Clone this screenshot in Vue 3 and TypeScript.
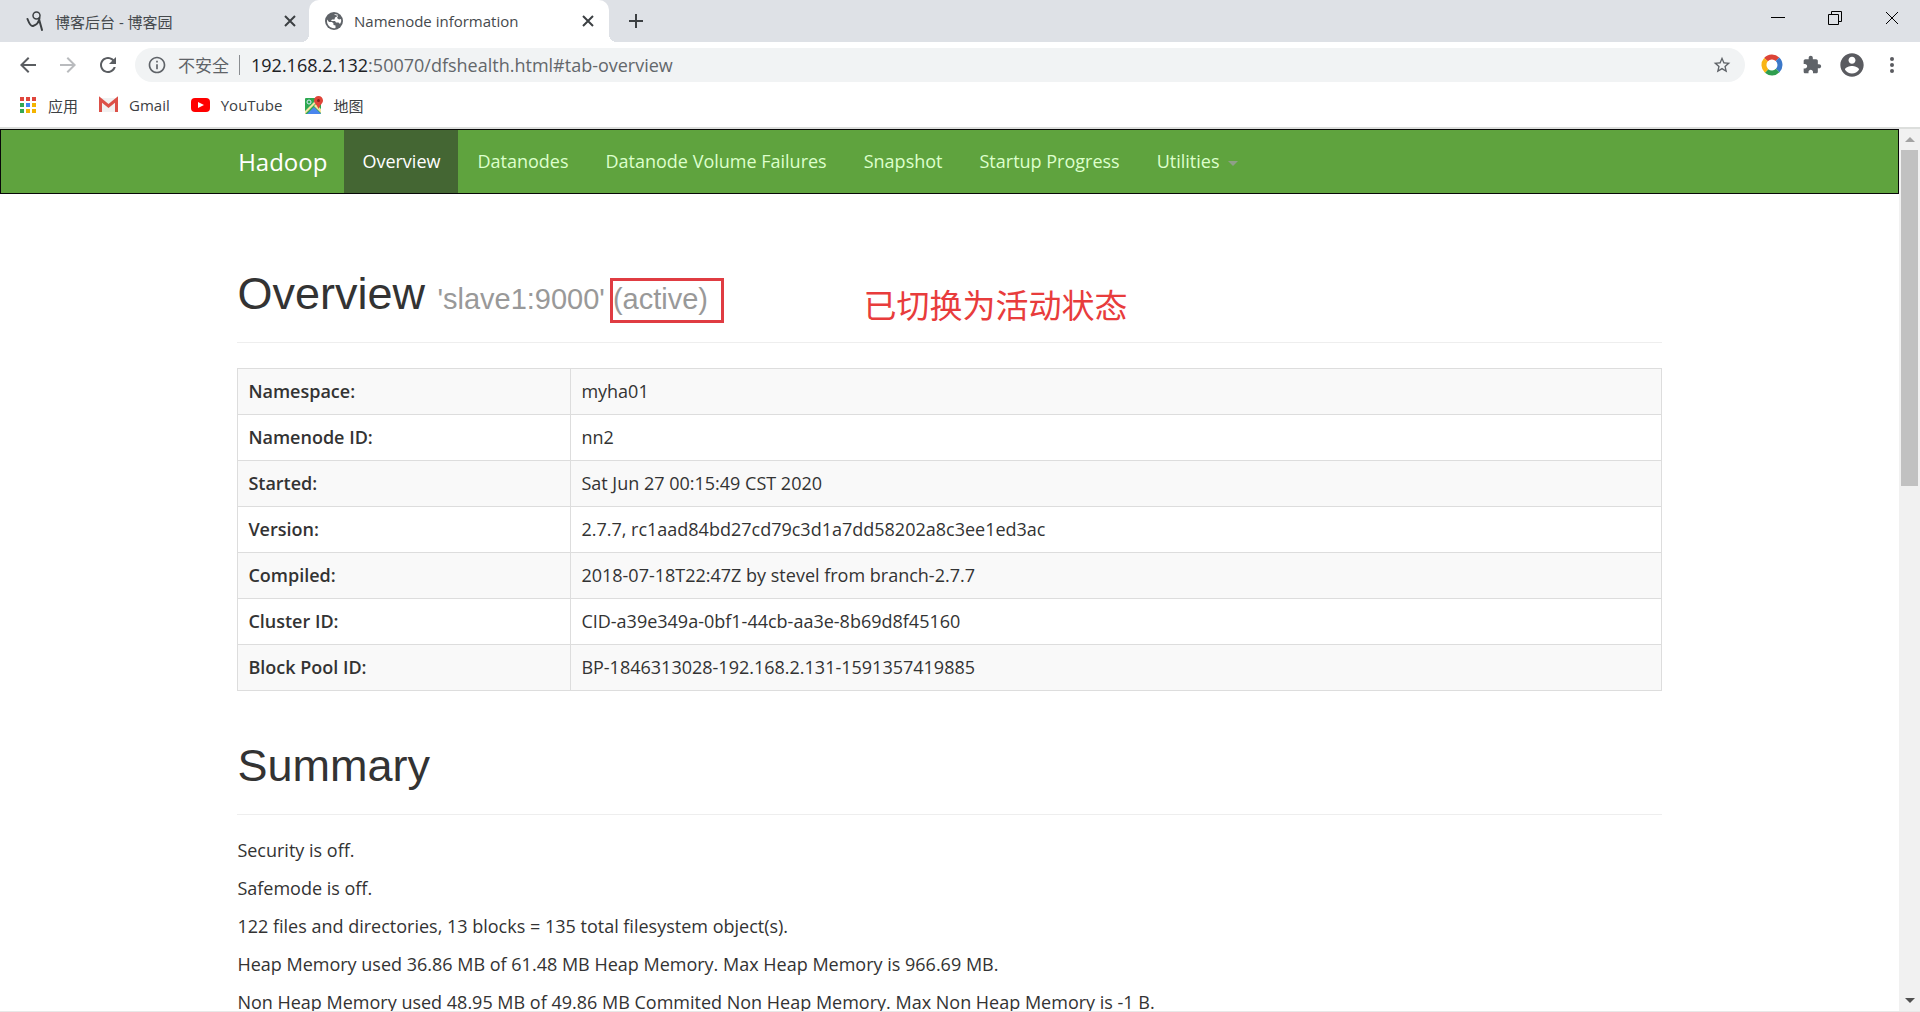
<script setup lang="ts">
interface Row {
  label: string
  value: string
}

const navItems: string[] = ['Overview', 'Datanodes', 'Datanode Volume Failures', 'Snapshot', 'Startup Progress']

const rows: Row[] = [
  { label: 'Namespace:', value: 'myha01' },
  { label: 'Namenode ID:', value: 'nn2' },
  { label: 'Started:', value: 'Sat Jun 27 00:15:49 CST 2020' },
  { label: 'Version:', value: '2.7.7, rc1aad84bd27cd79c3d1a7dd58202a8c3ee1ed3ac' },
  { label: 'Compiled:', value: '2018-07-18T22:47Z by stevel from branch-2.7.7' },
  { label: 'Cluster ID:', value: 'CID-a39e349a-0bf1-44cb-aa3e-8b69d8f45160' },
  { label: 'Block Pool ID:', value: 'BP-1846313028-192.168.2.131-1591357419885' },
]

const summary: string[] = [
  'Security is off.',
  'Safemode is off.',
  '122 files and directories, 13 blocks = 135 total filesystem object(s).',
  'Heap Memory used 36.86 MB of 61.48 MB Heap Memory. Max Heap Memory is 966.69 MB.',
  'Non Heap Memory used 48.95 MB of 49.86 MB Commited Non Heap Memory. Max Non Heap Memory is -1 B.',
]

const appColors: string[] = ['#e0463c', '#e0463c', '#e0463c', '#34a853', '#4285f4', '#f4b400', '#34a853', '#f4b400', '#f4b400']
</script>

<template>
  <div class="window">
    <header class="tabstrip">
      <div class="tab">
        <svg class="favicon" viewBox="0 0 18 20" fill="none" stroke="#3c4043" stroke-linecap="round">
          <circle cx="10.500" cy="4.500" r="3.500" stroke-width="1.500" />
          <path d="M1.500 8C3 12 5 15.500 7 15c3-1 6-3.500 6.500-8M13 8c1 4 2 7 3 11" stroke-width="2" />
        </svg>
        <span class="tab-title">博客后台 - 博客园</span>
        <button class="tab-close" aria-label="关闭标签页">
          <svg viewBox="0 0 20 20"><path d="M5 5l10 10M15 5L5 15" stroke="#3c4043" stroke-width="2" /></svg>
        </button>
      </div>
      <div class="tab active">
        <svg class="favicon" viewBox="0 0 18 18">
          <circle cx="9" cy="9" r="9" fill="#5f6368" />
          <path d="M2 7.500L4 10h3l1.500 1.500V13l2 .500V16C6 17 2 13.500 2 9zM9 2.500c1.500-.500 3-.200 4 .300L12 4.500l-2 1-.500 2H7l-1 1.500h4l1 1.500h2.500l1.500 1.500c1-1.500 1.500-3 1-5l-2 .500-2-1.500 1-2z" fill="#fff" />
        </svg>
        <span class="tab-title">Namenode information</span>
        <button class="tab-close" aria-label="关闭标签页">
          <svg viewBox="0 0 20 20"><path d="M5 5l10 10M15 5L5 15" stroke="#3c4043" stroke-width="2" /></svg>
        </button>
      </div>
      <button class="new-tab" aria-label="新标签页">
        <svg viewBox="0 0 20 20"><path d="M10 3v14M3 10h14" stroke="#3c4043" stroke-width="2" /></svg>
      </button>
      <div class="window-buttons">
        <button aria-label="最小化">
          <svg viewBox="0 0 14 14"><path d="M0 6.500h14" stroke="#000" /></svg>
        </button>
        <button aria-label="还原">
          <svg viewBox="0 0 14 14" fill="none" stroke="#000"><path d="M.500 3.500h10v10H.500zM3.500 3V.500h10v10H11" /></svg>
        </button>
        <button aria-label="关闭">
          <svg viewBox="0 0 14 14"><path d="M1 1l12 12M13 1L1 13" stroke="#000" /></svg>
        </button>
      </div>
    </header>

    <div class="toolbar">
      <button class="tool" aria-label="后退">
        <svg width="24" height="24" viewBox="0 0 24 24" fill="#5a5d61"><path d="M20 11H7.830l5.590-5.590L12 4l-8 8 8 8 1.410-1.410L7.830 13H20v-2z" /></svg>
      </button>
      <button class="tool" aria-label="前进">
        <svg width="24" height="24" viewBox="0 0 24 24" fill="#b9bbbe"><path d="M12 4l-1.410 1.410L16.170 11H4v2h12.170l-5.580 5.590L12 20l8-8z" /></svg>
      </button>
      <button class="tool" aria-label="重新加载">
        <svg width="24" height="24" viewBox="0 0 24 24" fill="#5a5d61"><path d="M17.650 6.350C16.200 4.900 14.210 4 12 4c-4.420 0-7.990 3.580-7.990 8s3.570 8 7.990 8c3.730 0 6.840-2.550 7.730-6h-2.080c-.820 2.330-3.040 4-5.650 4-3.310 0-6-2.690-6-6s2.690-6 6-6c1.660 0 3.140.690 4.220 1.780L13 11h7V4l-2.350 2.350z" /></svg>
      </button>
      <div class="omnibox">
        <svg width="20" height="20" viewBox="0 0 24 24" fill="#5f6368"><path d="M11 17h2v-6h-2v6zm1-15C6.480 2 2 6.480 2 12s4.480 10 10 10 10-4.480 10-10S17.520 2 12 2zm0 18c-4.410 0-8-3.590-8-8s3.590-8 8-8 8 3.590 8 8-3.590 8-8 8zM11 9h2V7h-2v2z" /></svg>
        <span class="insecure">不安全</span>
        <span class="divider"></span>
        <label class="host" for="address">192.168.2.132</label>
        <input id="address" class="path" type="text" value=":50070/dfshealth.html#tab-overview" spellcheck="false" />
        <button class="star" aria-label="添加书签">
          <svg width="20" height="20" viewBox="0 0 24 24" fill="#5f6368"><path d="M22 9.240l-7.190-.620L12 2 9.190 8.630 2 9.240l5.460 4.730L5.820 21 12 17.270 18.180 21l-1.630-7.030L22 9.240zM12 15.400l-3.760 2.270 1-4.280-3.320-2.880 4.380-.380L12 6.100l1.710 4.040 4.380.380-3.320 2.880 1 4.280L12 15.400z" /></svg>
        </button>
      </div>
      <button class="tool" aria-label="扩展">
        <svg width="22" height="22" viewBox="0 0 22 22" fill="none" stroke-width="5">
          <path d="M5 5.700A8 8 0 0 1 16.500 5.200" stroke="#dc4437" />
          <path d="M16.500 5.200A8 8 0 0 1 16.700 16.600" stroke="#3b78c9" />
          <path d="M16.700 16.600A8 8 0 0 1 5.600 17" stroke="#2f9e4f" />
          <path d="M5.600 17A8 8 0 0 1 5 5.700" stroke="#f9b515" />
        </svg>
      </button>
      <button class="tool" aria-label="扩展程序">
        <svg width="20" height="20" viewBox="0 0 24 24" fill="#5f6368"><path d="M20.500 11H19V7c0-1.100-.900-2-2-2h-4V3.500C13 2.120 11.880 1 10.500 1S8 2.120 8 3.500V5H4c-1.100 0-1.990.900-1.990 2v3.800H3.500c1.490 0 2.700 1.210 2.700 2.700s-1.210 2.700-2.700 2.700H2V20c0 1.100.900 2 2 2h3.800v-1.500c0-1.490 1.210-2.700 2.700-2.700 1.490 0 2.700 1.210 2.700 2.700V22H17c1.100 0 2-.900 2-2v-4h1.500c1.380 0 2.500-1.120 2.500-2.500S21.880 11 20.500 11z" /></svg>
      </button>
      <button class="tool" aria-label="用户">
        <svg width="28" height="28" viewBox="0 0 24 24" fill="#5a5b60"><path d="M12 2C6.480 2 2 6.480 2 12s4.480 10 10 10 10-4.480 10-10S17.520 2 12 2zm0 3c1.660 0 3 1.340 3 3s-1.340 3-3 3-3-1.340-3-3 1.340-3 3-3zm0 14.200c-2.500 0-4.710-1.280-6-3.220.030-1.990 4-3.080 6-3.080 1.990 0 5.970 1.090 6 3.080-1.290 1.940-3.500 3.220-6 3.220z" /></svg>
      </button>
      <button class="tool" aria-label="菜单">
        <svg width="20" height="20" viewBox="0 0 20 20" fill="#5a5b60"><circle cx="10" cy="4" r="2" /><circle cx="10" cy="10" r="2" /><circle cx="10" cy="16" r="2" /></svg>
      </button>
    </div>

    <nav class="bookmarks">
      <a href="#apps">
        <svg width="20" height="18" viewBox="0 0 20 18">
          <rect v-for="(c, i) in appColors" :key="i" :x="2 + (i % 3) * 6" :y="1 + Math.floor(i / 3) * 6" width="4" height="4" :fill="c" />
        </svg>
        <span>应用</span>
      </a>
      <a href="#gmail">
        <svg width="20" height="18" viewBox="0 0 20 18">
          <path d="M0 2h18v14H0z" fill="#f1f1f1" />
          <path d="M1.500 16V3.500L9.500 10l8-6.500V16" fill="none" stroke="#dc5048" stroke-width="3" />
        </svg>
        <span>Gmail</span>
      </a>
      <a href="#youtube">
        <svg width="20" height="18" viewBox="0 0 20 18"><rect x="0" y="2" width="19" height="14" rx="4" fill="#f00" /><path d="M7 6l6 3-6 3z" fill="#fff" /></svg>
        <span>YouTube</span>
      </a>
      <a href="#maps">
        <svg width="20" height="18" viewBox="0 0 20 18">
          <rect x="2" y="2" width="16" height="16" rx="1" fill="#2da850" />
          <path d="M4 18l7-7 7 7z" fill="#4a86ee" />
          <path d="M2 15L13 4h3L2 18zM11 10l7 7v-4l-5-5z" fill="#f4e3a0" />
          <circle cx="6" cy="6" r="2" fill="none" stroke="#d4e8f8" />
          <path d="M15.500 0c2.500 0 4.500 2 4.500 4.500 0 3-3 4-4.500 8.500C14 8.500 11 7.500 11 4.500 11 2 13 0 15.500 0z" fill="#e04438" />
          <circle cx="15.500" cy="4.500" r="1.500" fill="#8c2018" />
        </svg>
        <span>地图</span>
      </a>
    </nav>

    <div class="viewport">
      <div class="page">
        <nav class="navbar">
          <div class="container nav-row">
            <a class="brand" href="#hadoop">Hadoop</a>
            <a v-for="(item, i) in navItems" :key="item" class="nav-link" :class="{ current: i === 0 }" href="#tab">{{ item }}</a>
            <a class="nav-link" href="#utilities">Utilities<span class="caret"></span></a>
          </div>
        </nav>
        <main class="container">
          <div class="page-header">
            <h1>Overview <small>'slave1:9000' <span class="state">(active)</span></small></h1>
            <span class="note">已切换为活动状态</span>
          </div>
          <table>
            <tbody>
              <tr v-for="row in rows" :key="row.label">
                <th scope="row">{{ row.label }}</th>
                <td>{{ row.value }}</td>
              </tr>
            </tbody>
          </table>
          <div class="page-header second">
            <h1>Summary</h1>
          </div>
          <p v-for="line in summary" :key="line">{{ line }}</p>
        </main>
      </div>
      <div class="scrollbar">
        <span class="arrow up"></span>
        <div class="track"><div class="thumb"></div></div>
        <span class="arrow down"></span>
      </div>
    </div>
  </div>
</template>

<style>
body {
  margin: 0;
  background: #fff;
}
</style>

<style scoped>
* {
  box-sizing: border-box;
}
.window {
  display: flex;
  flex-direction: column;
  height: 100vh;
  overflow: hidden;
  font-family: "Open Sans", "Noto Sans CJK SC", sans-serif;
  color: #333;
}
svg {
  display: block;
  flex: none;
}
button {
  display: flex;
  align-items: center;
  justify-content: center;
  padding: 0;
  border: 0;
  background: none;
}
a {
  text-decoration: none;
}
.tabstrip {
  display: flex;
  flex: none;
  height: 42px;
  background: #dee1e6;
}
.tab {
  position: relative;
  display: flex;
  align-items: center;
  width: 309px;
  padding: 0 9px 0 26px;
  font-size: 15px;
  color: #45494d;
}
.tab.active {
  width: 300px;
  padding: 0 11px 0 16px;
  border-radius: 10px 10px 0 0;
  background: #fff;
}
.tab.active::before,
.tab.active::after {
  content: "";
  position: absolute;
  bottom: 0;
  width: 8px;
  height: 8px;
}
.tab.active::before {
  right: 100%;
  background: radial-gradient(circle at 0 0, transparent 8px, #fff 8px);
}
.tab.active::after {
  left: 100%;
  background: radial-gradient(circle at 100% 0, transparent 8px, #fff 8px);
}
.favicon {
  width: 18px;
  height: 20px;
}
.tab-title {
  flex: 1;
  margin-left: 11px;
  white-space: nowrap;
}
.tab-close,
.tab-close svg {
  width: 20px;
  height: 20px;
}
.new-tab {
  width: 54px;
}
.new-tab svg {
  width: 20px;
  height: 20px;
}
.window-buttons {
  display: flex;
  margin-left: auto;
}
.window-buttons button {
  width: 57px;
  height: 36px;
}
.window-buttons svg {
  width: 14px;
  height: 14px;
}
.toolbar {
  display: flex;
  flex: none;
  align-items: center;
  height: 45px;
  padding: 0 8px;
}
.tool {
  width: 40px;
  height: 34px;
}
.omnibox {
  display: flex;
  flex: 1;
  align-items: center;
  height: 34px;
  margin: 0 7px;
  padding: 0 13px 0 12px;
  border-radius: 17px;
  background: #f1f3f4;
  font-size: 18px;
}
.insecure {
  margin-left: 11px;
  font-size: 17px;
  color: #5f6368;
}
.divider {
  width: 1px;
  height: 20px;
  margin: 0 11px 0 10px;
  background: #8a8d91;
}
.host {
  color: #202124;
}
.path {
  flex: 1;
  min-width: 0;
  padding: 0;
  border: 0;
  outline: 0;
  background: none;
  font: inherit;
  color: #63676b;
}
.bookmarks {
  display: flex;
  flex: none;
  align-items: center;
  gap: 21px;
  height: 42px;
  padding: 0 18px 4px;
  border-bottom: 2px solid #dcdedc;
  font-size: 15px;
}
.bookmarks a {
  display: flex;
  align-items: center;
  gap: 10px;
  color: #3c4043;
}
.viewport {
  display: flex;
  flex: 1;
  min-height: 0;
  border-bottom: 1px solid #e8e8e8;
}
.page {
  flex: 1;
  overflow: hidden;
  font-size: 18px;
  line-height: 25px;
}
.container {
  width: 75%;
  margin: 0 auto;
}
.navbar {
  border: 1px solid #080808;
  background: #5fa33e;
}
.nav-row {
  display: flex;
  gap: 1px;
  height: 63px;
}
.brand {
  display: flex;
  align-items: center;
  padding-right: 16px;
  font-size: 24px;
  color: #fff;
}
.nav-link {
  display: flex;
  align-items: center;
  padding: 0 18px;
  color: #ddffcc;
  white-space: nowrap;
}
.nav-link.current {
  background: #446633;
  color: #fff;
}
.caret {
  margin: 4px 0 0 8px;
  border-top: 5px solid #8f9f88;
  border-right: 5px solid transparent;
  border-left: 5px solid transparent;
}
.page-header {
  position: relative;
  margin: 75px 0 25px;
  padding-bottom: 23px;
  border-bottom: 1px solid #eee;
}
.page-header.second {
  margin-top: 50px;
  margin-bottom: 23px;
}
h1 {
  margin: 0;
  font-family: "Liberation Sans", Arial, sans-serif;
  font-size: 45px;
  font-weight: 400;
  line-height: 50px;
}
small {
  font-size: 29px;
  line-height: 1;
  color: #999;
}
.state {
  position: relative;
}
.state::after {
  content: "";
  position: absolute;
  top: -5px;
  right: -16px;
  bottom: -8px;
  left: -3px;
  border: 3px solid #e03c42;
}
.note {
  position: absolute;
  top: 12px;
  left: 626px;
  font-size: 33px;
  line-height: 50px;
  color: #e83c3c;
}
table {
  width: 100%;
  border-collapse: collapse;
}
th,
td {
  height: 46px;
  padding: 9px 10px 10px;
  border: 1px solid #ddd;
  text-align: left;
}
th {
  width: 333px;
  font-weight: 600;
}
tr:nth-child(odd) {
  background: #f9f9f9;
}
p {
  margin: 0 0 13px;
}
.scrollbar {
  display: flex;
  flex: none;
  flex-direction: column;
  align-items: center;
  width: 21px;
  background: #f1f1f1;
}
.arrow {
  display: flex;
  flex: none;
  align-items: center;
  justify-content: center;
  height: 21px;
}
.arrow::before {
  content: "";
  border-right: 5px solid transparent;
  border-left: 5px solid transparent;
}
.arrow.up::before {
  border-bottom: 5px solid #a3a3a3;
}
.arrow.down::before {
  border-top: 5px solid #505050;
}
.track {
  flex: 1;
  width: 17px;
}
.thumb {
  height: 40%;
  background: #c1c1c1;
}
</style>
